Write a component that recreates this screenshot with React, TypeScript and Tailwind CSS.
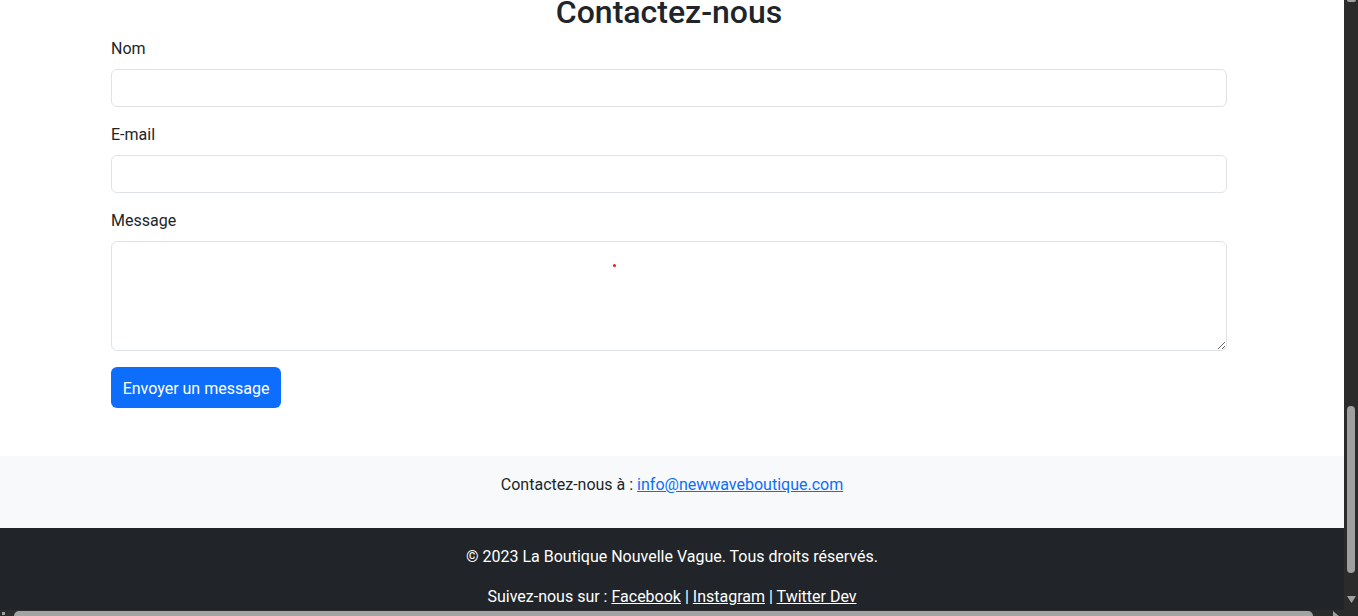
import React from "react";

const font = { fontFamily: "Roboto, 'Noto Sans', sans-serif" };

export default function App() {
  return (
    <div
      className="w-[1358px] h-[616px] overflow-hidden flex flex-col bg-[#2b2b2b] text-[#212529]"
      style={font}
    >
      <div className="flex flex-1 min-h-0">
        {/* page */}
        <div className="w-[1344px] flex flex-col bg-white overflow-hidden relative">
          <section className="pb-12">
            <div className="w-[1116px] ml-[111px]">
              <h2 className="text-[32px] leading-[38.4px] font-medium text-center mt-[-8px] mb-[6px] pt-[1px]">
                Contactez-nous
              </h2>
              <div className="mb-4">
                <label className="block text-[16px] leading-6 mb-2">Nom</label>
                <input
                  type="text"
                  className="block w-full h-[38px] border border-[#dee2e6] rounded-[6px] px-3 outline-none"
                />
              </div>
              <div className="mb-4">
                <label className="block text-[16px] leading-6 mb-2">E-mail</label>
                <input
                  type="email"
                  className="block w-full h-[38px] border border-[#dee2e6] rounded-[6px] px-3 outline-none"
                />
              </div>
              <div className="mb-4">
                <label className="block text-[16px] leading-6 mb-2">Message</label>
                <textarea
                  rows={4}
                  className="block w-full h-[110px] border border-[#dee2e6] rounded-[6px] px-3 py-1.5 outline-none"
                />
              </div>
              <button className="h-[41px] w-[170px] bg-[#0d6efd] text-white text-[16px] leading-6 rounded-[6px] pt-[3px]">
                Envoyer un message
              </button>
            </div>
          </section>
          <div className="bg-[#f8f9fa] pt-4 pb-[15px] text-center text-[16px] leading-6">
            <p className="mb-4 pt-[1px]">
              Contactez-nous à :{" "}
              <a href="#" className="text-[#0d6efd] underline">
                info@newwaveboutique.com
              </a>
            </p>
          </div>
          <footer className="bg-[#212529] text-white text-center text-[16px] leading-6 pt-[17px] pb-4 flex-1">
            <p className="mb-4">© 2023 La Boutique Nouvelle Vague. Tous droits réservés.</p>
            <p>
              Suivez-nous sur :{" "}
              <a href="#" className="underline">Facebook</a> |{" "}
              <a href="#" className="underline">Instagram</a> |{" "}
              <a href="#" className="underline">Twitter Dev</a>
            </p>
          </footer>
          <span className="absolute left-[613px] top-[264px] w-[3px] h-[3px] rounded-full bg-[#e01b1b]" />
        </div>
        {/* vertical scrollbar */}
        <div className="w-[14px] bg-[#2b2b2b] flex flex-col items-center">
          <div className="w-[9px] h-[2px] bg-[#9f9f9f] rounded-b-sm" />
          <div className="flex-1" />
          <div className="w-[8px] h-[167px] bg-[#9f9f9f] rounded-full" />
          <div className="h-[23px]" />
          <svg width="9" height="7" viewBox="0 0 9 7">
            <polygon points="0,0 9,0 4.5,7" fill="#9f9f9f" />
          </svg>
          <div className="h-[7px]" />
        </div>
      </div>
      {/* horizontal scrollbar */}
      <div className="h-[6px] flex items-start bg-[#2b2b2b]">
        <div className="w-[14px] h-[6px] flex items-start pl-[2px]">
          <div className="w-[3px] h-[3px] mt-[2px] bg-[#9f9f9f]" />
        </div>
        <div className="w-[1299px] h-[5px] mt-[1px] bg-[#a3a3a3] rounded-t-full" />
        <div className="w-[20px]" />
        <svg width="8" height="6" viewBox="0 0 8 6" className="mt-[1px]">
          <polygon points="0,0 7,6 0,6" fill="#9f9f9f" />
        </svg>
      </div>
    </div>
  );
}
